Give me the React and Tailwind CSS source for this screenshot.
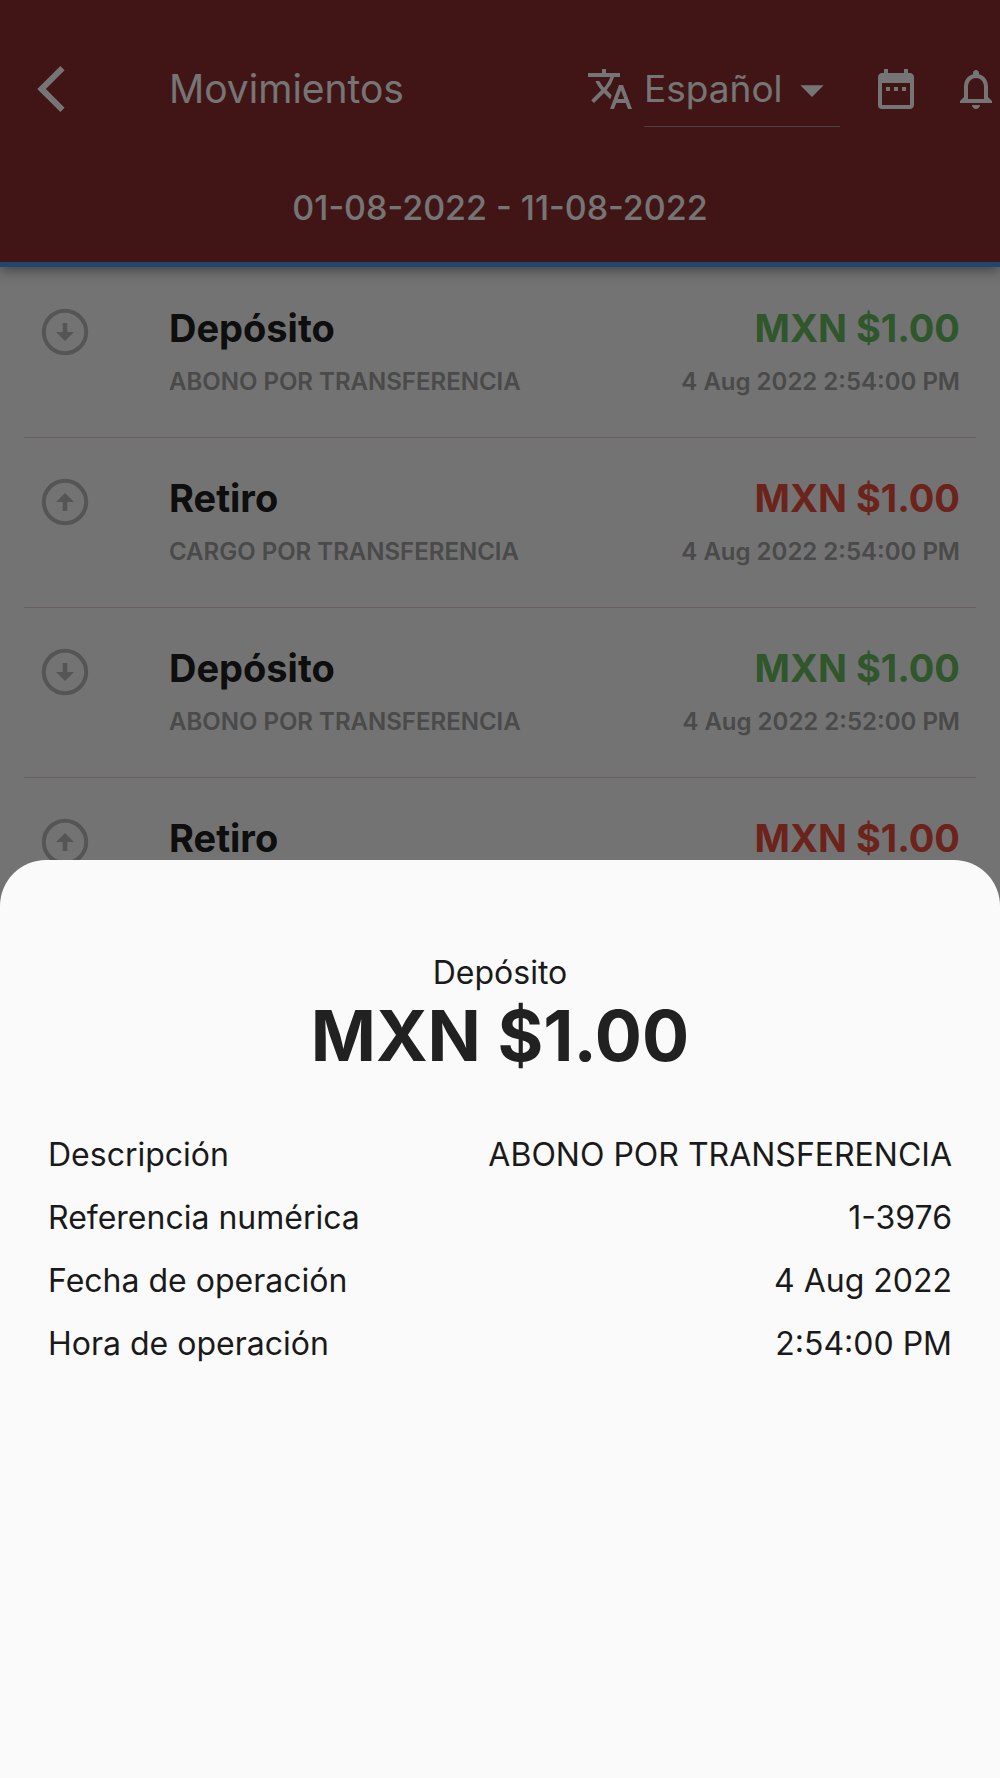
import { MdTranslate, MdDateRange, MdNotificationsNone, MdArrowDropDown } from "react-icons/md";

const movements = [
  { type: "Depósito", detail: "ABONO POR TRANSFERENCIA", amount: "MXN $1.00", date: "4 Aug 2022 2:54:00 PM", incoming: true },
  { type: "Retiro", detail: "CARGO POR TRANSFERENCIA", amount: "MXN $1.00", date: "4 Aug 2022 2:54:00 PM", incoming: false },
  { type: "Depósito", detail: "ABONO POR TRANSFERENCIA", amount: "MXN $1.00", date: "4 Aug 2022 2:52:00 PM", incoming: true },
  { type: "Retiro", detail: "CARGO POR TRANSFERENCIA", amount: "MXN $1.00", date: "4 Aug 2022 2:52:00 PM", incoming: false },
];

const details = [
  { label: "Descripción", value: "ABONO POR TRANSFERENCIA" },
  { label: "Referencia numérica", value: "1-3976" },
  { label: "Fecha de operación", value: "4 Aug 2022" },
  { label: "Hora de operación", value: "2:54:00 PM" },
];

function BackIcon() {
  return (
    <svg viewBox="0 0 28 46" className="h-[46px] w-7" fill="none" stroke="currentColor" strokeWidth="6" aria-hidden="true">
      <path d="M25.500 2.200 4.500 23l21 20.800" />
    </svg>
  );
}

function DirectionIcon({ incoming }) {
  return (
    <svg viewBox="0 0 48 48" className="mt-10 size-12 shrink-0 text-[#b9b9b9]" aria-hidden="true">
      <circle cx="24" cy="24" r="21.200" fill="none" stroke="currentColor" strokeWidth="4" />
      <path
        d={incoming ? "M21.700 15h4.600v9H33l-9 9-9-9h6.700z" : "M21.700 33h4.600v-9H33l-9-9-9 9h6.700z"}
        fill="currentColor"
      />
    </svg>
  );
}

function Header() {
  return (
    <header className="relative border-b-[5px] border-[#4798f8] bg-[#8e2e30] text-white shadow-[0_4px_12px_rgba(0,0,0,0.4)]">
      <div className="flex h-[178px] items-center pl-[37px]">
        <button type="button" aria-label="Volver" className="w-[132px] shrink-0">
          <BackIcon />
        </button>
        <h1 className="min-w-0 flex-1 text-[39px] leading-[48px]">Movimientos</h1>
        <div className="flex shrink-0 items-center gap-8">
          <div className="flex items-center gap-2.5">
            <MdTranslate className="size-12" aria-hidden="true" />
            <div className="relative w-[196px] border-b border-[#b08e90]">
              <select
                aria-label="Idioma"
                className="h-[74px] w-full appearance-none bg-transparent text-[37px] text-white"
                defaultValue="es"
              >
                <option value="es">Español</option>
              </select>
              <MdArrowDropDown className="pointer-events-none absolute top-2.5 right-0 size-14" aria-hidden="true" />
            </div>
          </div>
          <button type="button" aria-label="Elegir fechas">
            <MdDateRange className="size-12" />
          </button>
          <button type="button" aria-label="Notificaciones">
            <MdNotificationsNone className="size-12" />
          </button>
        </div>
      </div>
      <p className="pt-2.5 pb-[34px] text-center text-[34px] leading-10 font-medium">01-08-2022 - 11-08-2022</p>
    </header>
  );
}

function MovementRow({ movement }) {
  return (
    <li className="mx-6 flex h-[170px] items-start border-b border-[#e6cfcf] pr-4 pl-[17px] last:border-b-0">
      <DirectionIcon incoming={movement.incoming} />
      <div className="ml-20 min-w-0 flex-1 pt-[35px]">
        <div className="flex justify-between text-[38px] leading-[50px] font-bold">
          <span className="text-[#202020]">{movement.type}</span>
          <span className={movement.incoming ? "text-[#66bd5e]" : "text-[#e94e3d]"}>{movement.amount}</span>
        </div>
        <div className="mt-[13px] flex justify-between text-[24px] leading-8 font-semibold text-[#a1a1a1]">
          <span>{movement.detail}</span>
          <span>{movement.date}</span>
        </div>
      </div>
    </li>
  );
}

function DetailSheet() {
  return (
    <section
      role="dialog"
      aria-label="Detalle del movimiento"
      className="min-h-[918px] rounded-t-[46px] bg-[#fafafa] px-12 pt-[93px] text-[32px] leading-10 text-[#1a1a1a]"
    >
      <p className="text-center">Depósito</p>
      <p className="text-center text-[70px] leading-[86px] font-bold text-[#212121]">MXN $1.00</p>
      <dl className="mt-14 flex flex-col gap-[23px]">
        {details.map((item) => (
          <div key={item.label} className="flex justify-between">
            <dt>{item.label}</dt>
            <dd>{item.value}</dd>
          </div>
        ))}
      </dl>
    </section>
  );
}

export default function App() {
  return (
    <div className="min-h-screen bg-[#fafafa] font-['Inter',sans-serif]">
      <Header />
      <main>
        <ul className="pt-px">
          {movements.map((movement, index) => (
            <MovementRow key={index} movement={movement} />
          ))}
        </ul>
      </main>
      <div className="fixed inset-0 flex flex-col justify-end bg-black/54">
        <DetailSheet />
      </div>
    </div>
  );
}
